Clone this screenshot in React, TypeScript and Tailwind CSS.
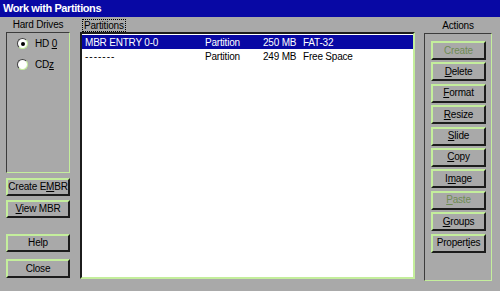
import React from 'react';

const font = { fontFamily: '"Liberation Sans", Arial, sans-serif' };

const Btn: React.FC<{ label: string; u?: number; disabled?: boolean; className?: string }> = ({ label, u, disabled, className = '' }) => {
  const parts =
    u === undefined ? (
      label
    ) : (
      <>
        {label.slice(0, u)}
        <span className="underline underline-offset-1">{label[u]}</span>
        {label.slice(u + 1)}
      </>
    );
  return (
    <div
      className={`flex items-center justify-center border-2 border-t-[#c4ee9c] border-l-[#c4ee9c] border-b-[#1c1c1c] border-r-[#1c1c1c] bg-[#a9a9a9] text-[10px] tracking-[-0.2px] leading-none whitespace-nowrap ${
        disabled ? 'text-[#6f8c55]' : 'text-black'
      } ${className}`}
    >
      <span>{parts}</span>
    </div>
  );
};

const Radio: React.FC<{ checked?: boolean; label: React.ReactNode }> = ({ checked, label }) => (
  <div className="flex items-center gap-[7px] pl-[10px] text-[10px] text-black">
    <div className="w-[11px] h-[11px] rounded-full bg-white border border-t-[#404040] border-l-[#404040] border-b-[#c4ee9c] border-r-[#c4ee9c] flex items-center justify-center">
      {checked && <div className="w-[4px] h-[4px] rounded-full bg-black" />}
    </div>
    <span>{label}</span>
  </div>
);

export default function App() {
  return (
    <div className="w-[500px] h-[291px] bg-[#a9a9a9] flex flex-col overflow-hidden tracking-[-0.2px]" style={font}>
      <div className="h-[17px] bg-[#0808a4] text-white font-bold text-[11px] tracking-[-0.4px] leading-[16px] pl-[3px]">
        Work with Partitions
      </div>
      <div className="flex flex-1 pl-[6px] pt-[1px]">
        <div className="w-[64px] flex flex-col">
          <div className="h-[14px] text-[10px] leading-[14px] text-center">Hard Drives</div>
          <div className="h-[141px] border border-t-[#3c3c3c] border-l-[#3c3c3c] border-b-[#c4ee9c] border-r-[#c4ee9c] flex flex-col gap-[6px] pt-[3px]">
            <Radio checked label={<>HD <span className="underline">0</span></>} />
            <Radio label={<>CD<span className="underline">z</span></>} />
          </div>
          <Btn label="Create EMBR" u={8} className="h-[18px] mt-[5px]" />
          <Btn label="View MBR" u={0} className="h-[18px] mt-[4px]" />
          <Btn label="Help" className="h-[18px] mt-[16px]" />
          <Btn label="Close" className="h-[19px] mt-[7px]" />
        </div>
        <div className="w-[335px] ml-[10px] flex flex-col">
          <div className="h-[14px] flex">
            <span className="ml-[2px] mt-[1px] px-[1px] h-[13px] border border-dotted border-black text-[10px] leading-[11px]">Partitions</span>
          </div>
          <div className="h-[247px] bg-white border-2 border-t-[#1c1c1c] border-l-[#1c1c1c] border-b-[#c4ee9c] border-r-[#c4ee9c] pt-[1px] text-[10px]">
            <div className="h-[14px] bg-[#0808a4] text-white flex items-center whitespace-nowrap">
              <span className="w-[123px] shrink-0 pl-[3px]">MBR ENTRY 0-0</span>
              <span className="w-[58px] shrink-0">Partition</span>
              <span className="w-[40px] shrink-0">250 MB</span>
              <span>FAT-32</span>
            </div>
            <div className="h-[14px] text-black flex items-center whitespace-nowrap">
              <span className="w-[123px] shrink-0 pl-[3px] tracking-[1px]">-------</span>
              <span className="w-[58px] shrink-0">Partition</span>
              <span className="w-[40px] shrink-0">249 MB</span>
              <span>Free Space</span>
            </div>
          </div>
        </div>
        <div className="w-[68px] ml-[9px] flex flex-col">
          <div className="h-[15px] text-[10px] leading-[15px] text-center">Actions</div>
          <div className="h-[248px] border border-t-[#3c3c3c] border-l-[#3c3c3c] border-b-[#c4ee9c] border-r-[#c4ee9c] flex flex-col gap-[2.4px] pt-[7px] pl-[6px]">
            <Btn label="Create" disabled className="w-[55px] h-[19px]" />
            <Btn label="Delete" u={0} className="w-[55px] h-[19px]" />
            <Btn label="Format" u={0} className="w-[55px] h-[19px]" />
            <Btn label="Resize" u={0} className="w-[55px] h-[19px]" />
            <Btn label="Slide" u={0} className="w-[55px] h-[19px]" />
            <Btn label="Copy" u={0} className="w-[55px] h-[19px]" />
            <Btn label="Image" u={1} className="w-[55px] h-[19px]" />
            <Btn label="Paste" u={0} disabled className="w-[55px] h-[19px]" />
            <Btn label="Groups" u={0} className="w-[55px] h-[19px]" />
            <Btn label="Properties" u={7} className="w-[55px] h-[19px]" />
          </div>
        </div>
      </div>
    </div>
  );
}
